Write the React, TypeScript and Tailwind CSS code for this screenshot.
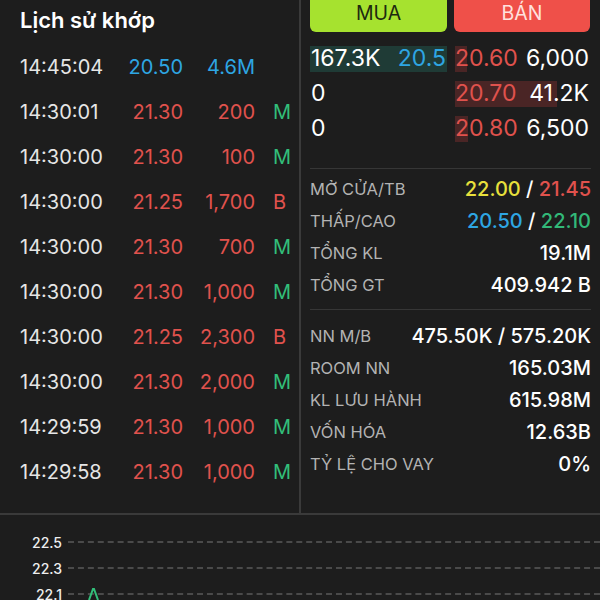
const trades = [
  { t: "14:45:04", p: "20.50", v: "4.6M", s: "", c: "text-[#2ea6e3]" },
  { t: "14:30:01", p: "21.30", v: "200", s: "M", c: "text-[#e0524d]" },
  { t: "14:30:00", p: "21.30", v: "100", s: "M", c: "text-[#e0524d]" },
  { t: "14:30:00", p: "21.25", v: "1,700", s: "B", c: "text-[#e0524d]" },
  { t: "14:30:00", p: "21.30", v: "700", s: "M", c: "text-[#e0524d]" },
  { t: "14:30:00", p: "21.30", v: "1,000", s: "M", c: "text-[#e0524d]" },
  { t: "14:30:00", p: "21.25", v: "2,300", s: "B", c: "text-[#e0524d]" },
  { t: "14:30:00", p: "21.30", v: "2,000", s: "M", c: "text-[#e0524d]" },
  { t: "14:29:59", p: "21.30", v: "1,000", s: "M", c: "text-[#e0524d]" },
  { t: "14:29:58", p: "21.30", v: "1,000", s: "M", c: "text-[#e0524d]" },
];

const book = [
  { bv: "167.3K", bp: "20.5", sp: "20.60", sv: "6,000", sw: 12 },
  { bv: "0", bp: "", sp: "20.70", sv: "41.2K", sw: 102 },
  { bv: "0", bp: "", sp: "20.80", sv: "6,500", sw: 13 },
];

function Stat({ label, children }: { label: string; children: React.ReactNode }) {
  return (
    <div className="flex h-[32px] items-center justify-between">
      <span className="text-[16.5px] text-[#b3b3b3]">{label}</span>
      <span className="text-[20px] font-medium text-white">{children}</span>
    </div>
  );
}

export default function App() {
  return (
    <div
      className="h-[600px] w-[600px] overflow-hidden bg-[#1d1d1d] text-white"
      style={{ fontFamily: "Inter, 'Noto Sans', sans-serif" }}
    >
      <div className="flex h-[515px] border-b-2 border-[#3a3a3a]">
        {/* lịch sử khớp */}
        <div className="w-[301px] border-r-2 border-[#3a3a3a] pl-[20px]">
          <div className="flex h-[44px] items-center pb-[4px] text-[22px] font-semibold">Lịch sử khớp</div>
          {trades.map((r, i) => (
            <div key={i} className="flex h-[45px] items-center text-[20px]">
              <span className="w-[100px] text-[#e6e6e6]">{r.t}</span>
              <span className={`w-[63px] text-right ${r.c}`}>{r.p}</span>
              <span className={`w-[72px] text-right ${r.c}`}>{r.v}</span>
              <span className={`ml-[18px] ${r.s === "B" ? "text-[#e0524d]" : "text-[#32bf7a]"}`}>{r.s}</span>
            </div>
          ))}
        </div>

        {/* bên phải */}
        <div className="flex-1 px-[9px]">
          <div className="flex gap-[7px]">
            <div className="flex h-[32px] w-[137px] items-center justify-center rounded-b-[6px] bg-[#a6e22f] pb-[4px] text-[19.5px] text-[#1d2a10]">
              MUA
            </div>
            <div className="flex h-[32px] w-[136px] items-center justify-center rounded-b-[6px] bg-[#ef5049] pb-[4px] text-[19.5px] text-[#ffe1de]">
              BÁN
            </div>
          </div>
          <div className="mt-[9px]">
            {book.map((r, i) => (
              <div key={i} className="flex h-[35px] items-center text-[23px]">
                <div className={`flex h-[26px] w-[137px] items-center justify-between pr-[1px] ${i === 0 ? "bg-[#1f3b36]" : ""}`}>
                  <span className="pl-[1px]">{r.bv}</span>
                  <span className="text-[#2ea6e3]">{r.bp}</span>
                </div>
                <div className="relative ml-[8px] flex h-[26px] flex-1 items-center justify-between">
                  <div className="absolute left-0 top-0 h-full bg-[#4a2525]" style={{ width: r.sw }} />
                  <span className="relative text-[#e0524d]">{r.sp}</span>
                  <span className="relative pr-[2px]">{r.sv}</span>
                </div>
              </div>
            ))}
          </div>

          <div className="mt-[22px] border-t border-[#363636] pt-[4px] pb-[8px]">
            <Stat label="MỞ CỬA/TB">
              <span className="text-[#e8e03c]">22.00</span> / <span className="text-[#e0524d]">21.45</span>
            </Stat>
            <Stat label="THẤP/CAO">
              <span className="text-[#2ea6e3]">20.50</span> / <span className="text-[#32b878]">22.10</span>
            </Stat>
            <Stat label="TỔNG KL">19.1M</Stat>
            <Stat label="TỔNG GT">409.942 B</Stat>
          </div>
          <div className="border-t border-[#363636] pt-[10px]">
            <Stat label="NN M/B">475.50K / 575.20K</Stat>
            <Stat label="ROOM NN">165.03M</Stat>
            <Stat label="KL LƯU HÀNH">615.98M</Stat>
            <Stat label="VỐN HÓA">12.63B</Stat>
            <Stat label="TỶ LỆ CHO VAY">0%</Stat>
          </div>
        </div>
      </div>

      {/* biểu đồ */}
      <div className="relative pt-[14px]">
        {["22.5", "22.3", "22.1"].map((v) => (
          <div key={v} className="flex h-[26px] items-center">
            <span className="w-[62px] text-right text-[14px] font-medium text-[#eeeeee]">{v}</span>
            <div className="ml-[6px] flex-1 border-t-2 border-dashed border-[#4a4a4a]" />
          </div>
        ))}
        <svg className="absolute left-[88px] top-[72px]" width="12" height="14" viewBox="0 0 12 14">
          <path d="M1 13 L5 2 L6 2 L10 13" fill="none" stroke="#32bf7a" strokeWidth="2" />
        </svg>
      </div>
    </div>
  );
}
